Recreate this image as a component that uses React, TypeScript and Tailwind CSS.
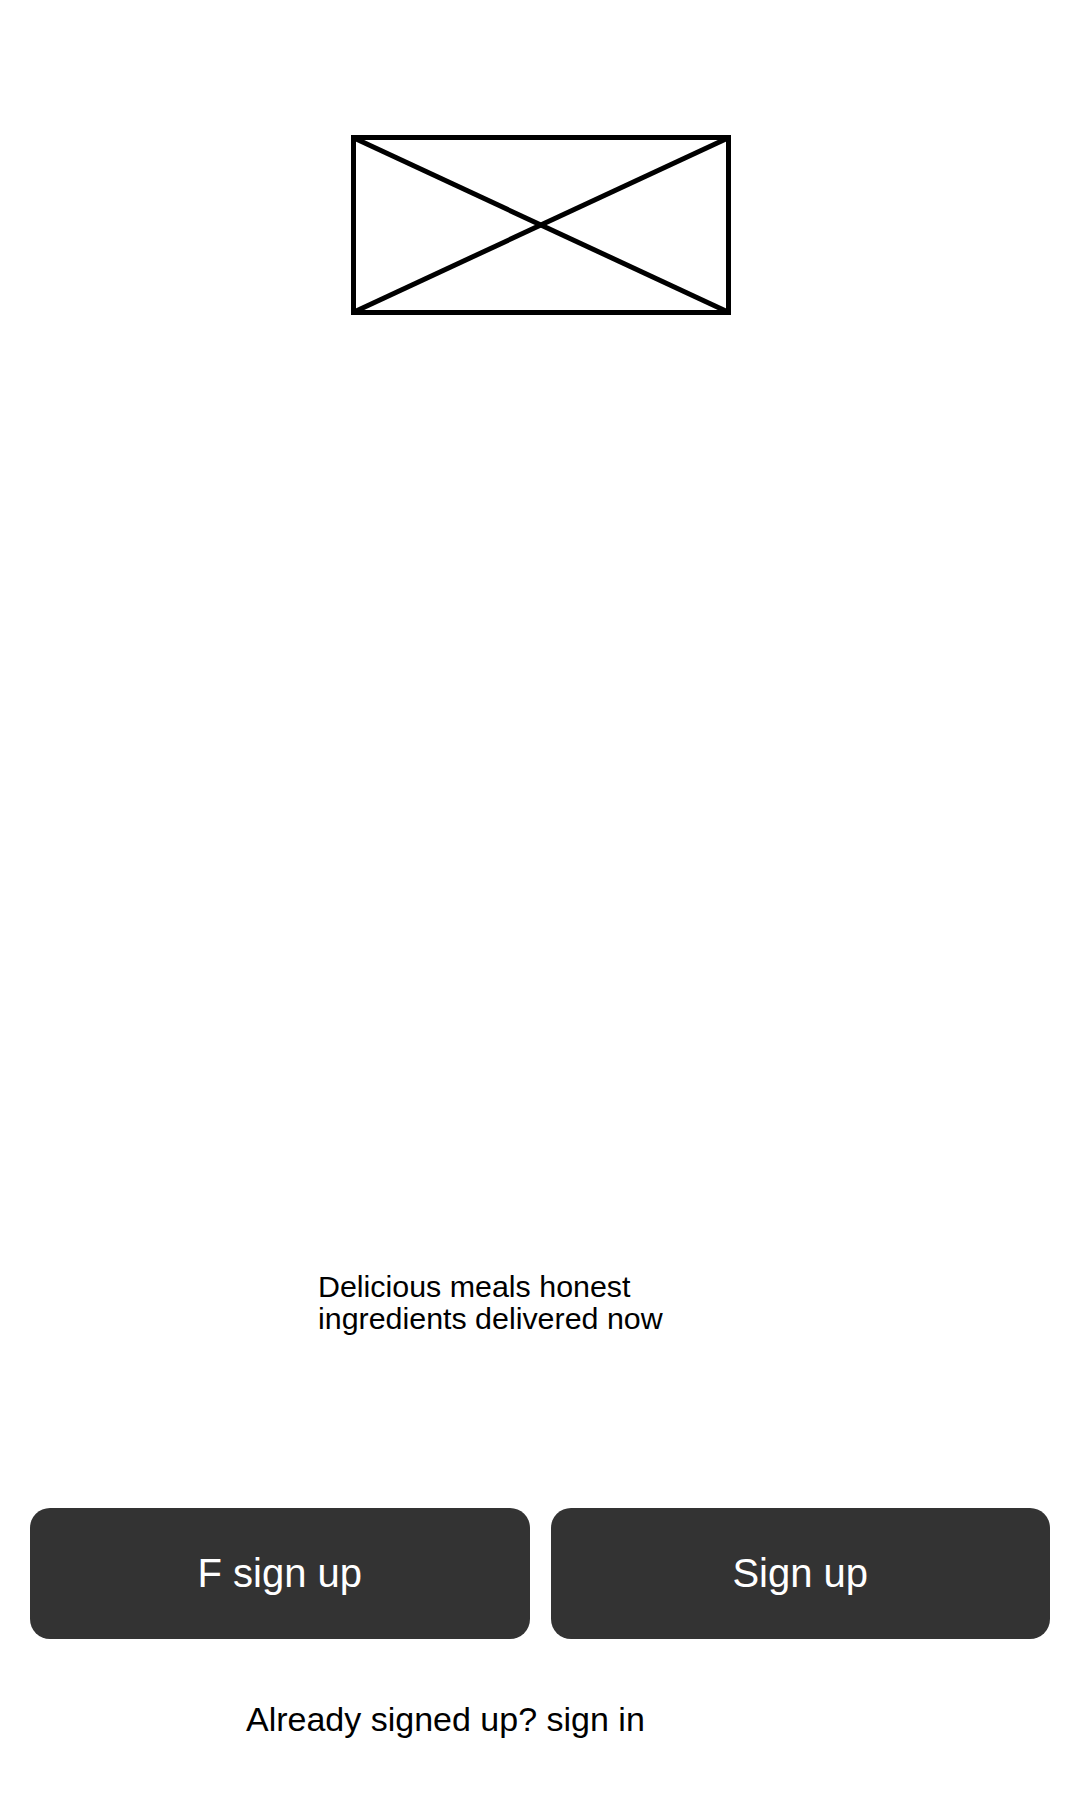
import React from "react";

export default function App() {
  return (
    <div
      className="w-[1080px] h-[1800px] bg-white flex flex-col text-black"
      style={{ fontFamily: '"Liberation Sans", Arial, sans-serif' }}
    >
      <div className="mt-[135px] flex justify-center pl-[2px]">
        <svg width="380" height="180" viewBox="0 0 380 180" className="block">
          <rect x="2.5" y="2.5" width="375" height="175" fill="none" stroke="#000" strokeWidth="5" />
          <line x1="3" y1="3" x2="377" y2="177" stroke="#000" strokeWidth="5" />
          <line x1="377" y1="3" x2="3" y2="177" stroke="#000" strokeWidth="5" />
        </svg>
      </div>
      <p className="mt-[955px] ml-[318px] text-[30.4px] leading-[32px]">
        Delicious meals honest
        <br />
        ingredients delivered now
      </p>
      <div className="mt-[174px] px-[30px] flex gap-[21px]">
        <button className="w-[500px] h-[131px] rounded-[20px] bg-[#333333] text-white text-[40px] flex items-center justify-center pb-[2px]">
          F sign up
        </button>
        <button className="w-[500px] h-[131px] rounded-[20px] bg-[#333333] text-white text-[40px] flex items-center justify-center pb-[2px]">
          Sign up
        </button>
      </div>
      <p className="mt-[61px] ml-[246px] text-[34px] leading-[39px]">
        Already signed up? sign in
      </p>
    </div>
  );
}
